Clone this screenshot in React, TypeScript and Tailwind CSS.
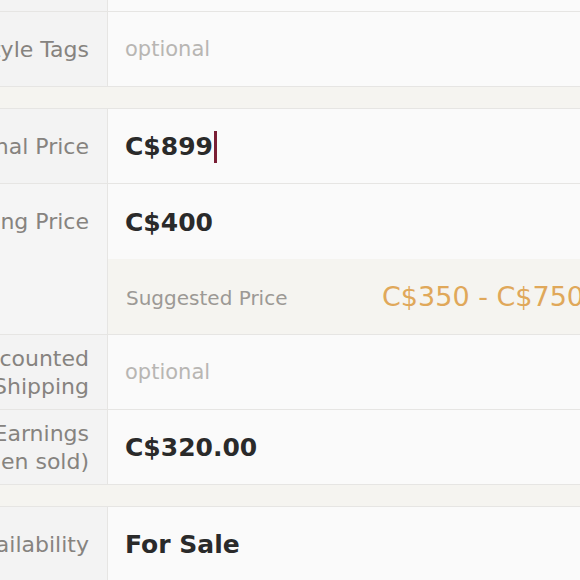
const font = { fontFamily: '"DejaVu Sans", "Open Sans", sans-serif' };

function Label({ children }: { children: React.ReactNode }) {
  return (
    <div className="flex h-[74px] items-center justify-end overflow-hidden pt-[2px] pr-[18px]">
      <div className="whitespace-nowrap text-right text-[22px] leading-[28px] text-[#86837f]">
        {children}
      </div>
    </div>
  );
}

function Row({ label, children }: { label: React.ReactNode; children: React.ReactNode }) {
  return (
    <div className="grid grid-cols-[108px_1fr] border-b border-[#e6e5e3]">
      <div className="border-r border-[#e6e5e3] bg-[#f3f3f3]">
        <Label>{label}</Label>
      </div>
      <div className="flex h-[74px] items-center pt-[2px] pl-[17px]">{children}</div>
    </div>
  );
}

function Value({ children }: { children: React.ReactNode }) {
  return <span className="text-[25px] font-bold text-[#2a2a2a]">{children}</span>;
}

function Optional() {
  return <span className="text-[21px] text-[#b8b6b3]">optional</span>;
}

function Gap() {
  return <div className="h-[22px] border-b border-[#e6e5e3] bg-[#f5f4f0]" />;
}

export default function App() {
  return (
    <div className="h-[580px] w-[580px] overflow-hidden bg-[#fafafa]" style={font}>
      <div className="-mt-[63px]">
        <Row label="Category Listing">
          <span />
        </Row>
        <Row label="Style Tags">
          <Optional />
        </Row>
        <Gap />
        <Row label="Original Price">
          <Value>C$899</Value>
          <span className="ml-[1px] h-[32px] w-[3px] bg-[#7a1f35]" />
        </Row>
        <div className="grid grid-cols-[108px_1fr] border-b border-[#e6e5e3]">
          <div className="border-r border-[#e6e5e3] bg-[#f5f5f5]">
            <Label>Listing Price</Label>
          </div>
          <div>
            <div className="flex h-[75px] items-center pt-[2px] pl-[17px]">
              <Value>C$400</Value>
            </div>
            <div className="flex h-[75px] items-center whitespace-nowrap bg-[#f5f4f0] pt-[2px] pl-[18px]">
              <span className="w-[256px] text-[20px] text-[#9c9995]">Suggested Price</span>
              <span className="text-[27px] text-[#e0a85a]">C$350 - C$750</span>
            </div>
          </div>
        </div>
        <Row
          label={
            <>
              Discounted
              <br />
              Shipping
            </>
          }
        >
          <Optional />
        </Row>
        <Row
          label={
            <>
              Total Earnings
              <br />
              (when sold)
            </>
          }
        >
          <Value>C$320.00</Value>
        </Row>
        <Gap />
        <Row label="Availability">
          <Value>For Sale</Value>
        </Row>
      </div>
    </div>
  );
}
